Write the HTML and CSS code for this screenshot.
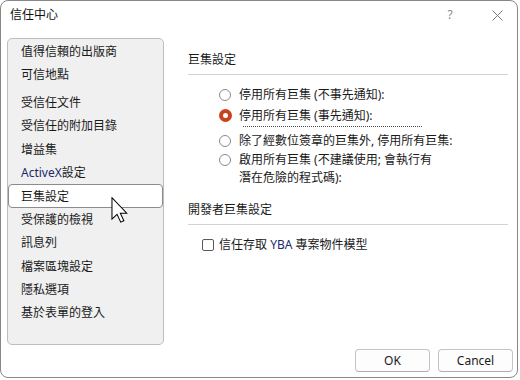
FILE: index.html
```html
<!DOCTYPE html>
<html lang="zh-Hant">
<head>
<meta charset="utf-8">
<title>信任中心</title>
<link rel="stylesheet" href="styles.css">
</head>
<body>
<div class="window">
  <div class="titlebar">
    <span class="title">信任中心</span>
    <span class="help">?</span>
    <span class="close"><svg width="11" height="11" viewBox="0 0 11 11"><path d="M0.5 0.5 L10.5 10.5 M10.5 0.5 L0.5 10.5" stroke="#7a7a7a" stroke-width="1" fill="none"/></svg></span>
  </div>
  <div class="main">
    <nav class="sidebar">
      <div class="item">值得信賴的出版商</div>
      <div class="item">可信地點</div>
      <div class="item group">受信任文件</div>
      <div class="item">受信任的附加目錄</div>
      <div class="item">增益集</div>
      <div class="item"><span class="latin">ActiveX</span>設定</div>
      <div class="item selected">巨集設定</div>
      <div class="item">受保護的檢視</div>
      <div class="item">訊息列</div>
      <div class="item">檔案區塊設定</div>
      <div class="item">隱私選項</div>
      <div class="item">基於表單的登入</div>
    </nav>
    <div class="content">
      <div class="section-title">巨集設定</div>
      <div class="options">
        <div class="option o1"><span class="radio"></span><span class="label">停用所有巨集 (不事先通知):</span></div>
        <div class="option o2"><span class="radio checked"></span><span class="label focus">停用所有巨集 (事先通知):</span></div>
        <div class="option o3"><span class="radio"></span><span class="label">除了經數位簽章的巨集外, 停用所有巨集:</span></div>
        <div class="option o4"><span class="radio"></span><span class="label">啟用所有巨集 (不建議使用; 會執行有<br>潛在危險的程式碼):</span></div>
      </div>
      <div class="section-title dev">開發者巨集設定</div>
      <div class="check-row"><span class="checkbox"></span><span class="label">信任存取 <span class="latin">YBA</span> 專案物件模型</span></div>
    </div>
  </div>
  <div class="footer">
    <button class="btn">OK</button>
    <button class="btn">Cancel</button>
  </div>
  <svg class="cursor" width="17" height="26" viewBox="0 0 12 19"><path d="M0.5 0.5 L0.5 16.2 L4.2 12.7 L6.9 18.4 L9.2 17.4 L6.6 11.8 L11.3 11.8 Z" fill="#fff" stroke="#000" stroke-width="0.75" stroke-linejoin="miter"/></svg>
</div>
</body>
</html>
```
FILE: styles.css
```css
html, body {
  margin: 0;
  padding: 0;
  background: #ffffff;
}
body {
  font-family: "Noto Sans", "Noto Sans CJK TC", sans-serif;
  font-size: 12px;
  color: #1a1a1a;
}
.window {
  position: relative;
  width: 518px;
  height: 378px;
  box-sizing: border-box;
  border: 1px solid #878787;
  border-radius: 8px;
  background: #ffffff;
  display: flex;
  flex-direction: column;
  overflow: hidden;
}
.titlebar {
  height: 37px;
  box-sizing: border-box;
  padding: 6px 14px 0 9px;
  display: flex;
  align-items: flex-start;
  line-height: 16px;
}
.title {
  font-size: 12px;
  color: #111;
}
.help {
  margin-left: auto;
  width: 12px;
  text-align: center;
  color: #8a8a8a;
  font-size: 12px;
}
.close {
  margin-left: 35px;
  width: 12px;
  height: 16px;
  display: flex;
  align-items: center;
  justify-content: center;
}
.main {
  display: flex;
  height: 307px;
  padding-left: 6px;
}
.sidebar {
  width: 157px;
  height: 307px;
  box-sizing: border-box;
  border: 1px solid #bdbdbd;
  border-radius: 5px;
  background: #f0f0f0;
  display: flex;
  flex-direction: column;
}
.item {
  height: 23.4px;
  box-sizing: border-box;
  border: 1px solid transparent;
  border-radius: 4px;
  padding-left: 12px;
  display: flex;
  align-items: center;
  white-space: nowrap;
}
.item.group {
  margin-top: 4.4px;
}
.item.selected {
  background: #ffffff;
  border-color: #8c8c8c;
  height: 24.4px;
  margin-bottom: -1px;
}
.latin {
  color: #1c2a6b;
}
.content {
  margin-left: 24px;
  width: 320px;
  display: flex;
  flex-direction: column;
}
.section-title {
  margin-top: 14px;
  line-height: 16px;
  padding-bottom: 6px;
  border-bottom: 1px solid #d2d2d2;
}
.section-title.dev {
  margin-top: 15px;
}
.options {
  display: flex;
  flex-direction: column;
  padding-left: 31px;
  margin-top: 10px;
}
.option {
  display: flex;
  align-items: flex-start;
  white-space: nowrap;
}
.option .label {
  margin-left: 8px;
  line-height: 18px;
}
.o1 { height: 20px; padding-top: 1px; box-sizing: border-box; }
.o2 { height: 21px; padding-top: 1.5px; box-sizing: border-box; }
.o3 { height: 20px; margin-top: 5px; padding-top: 1px; box-sizing: border-box; }
.o4 { padding-top: 0; }
.radio {
  flex: none;
  width: 12px;
  height: 12px;
  box-sizing: border-box;
  border: 1px solid #8a8a8a;
  border-radius: 50%;
  background: #ffffff;
  margin-top: 3px;
}
.radio.checked {
  width: 13px;
  height: 13px;
  border: 4px solid #c6431d;
  margin-top: 2.5px;
  margin-left: -0.5px;
  margin-right: -0.5px;
}
.label.focus {
  position: relative;
}
.label.focus::after {
  content: "";
  position: absolute;
  left: 4px;
  top: 19px;
  width: 179px;
  border-bottom: 1px dotted #4a4a4a;
}
.check-row {
  display: flex;
  align-items: center;
  padding-left: 14px;
  margin-top: 12px;
  line-height: 16px;
}
.checkbox {
  width: 12px;
  height: 12px;
  box-sizing: border-box;
  border: 1px solid #5a5a5a;
  border-radius: 2px;
  background: #fff;
}
.check-row .label {
  margin-left: 5px;
}
.footer {
  display: flex;
  justify-content: flex-end;
  gap: 8px;
  padding: 4px 4px 0 0;
}
.btn {
  width: 75px;
  height: 23px;
  box-sizing: border-box;
  border: 1px solid #c4c4c4;
  border-bottom-color: #adadad;
  border-radius: 4px;
  background: #fdfdfd;
  font-family: "Noto Sans", "Noto Sans CJK TC", sans-serif;
  font-size: 12px;
  color: #1a1a1a;
  padding: 0;
  line-height: 20px;
}
.cursor {
  position: absolute;
  left: 110px;
  top: 196px;
}
```
